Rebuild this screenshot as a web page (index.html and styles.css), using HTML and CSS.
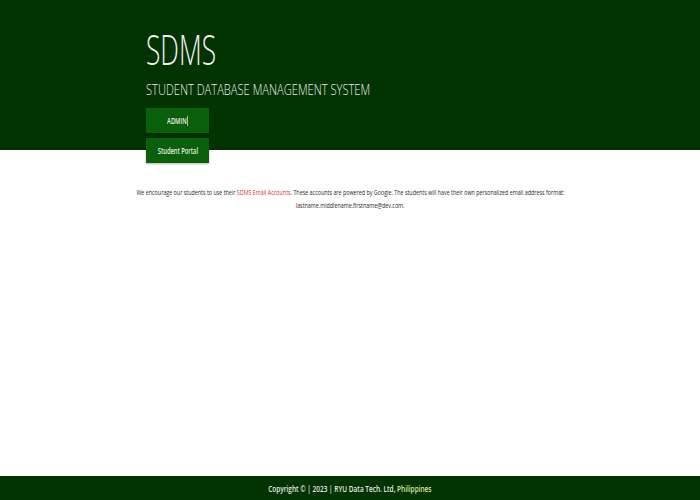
FILE: index.html
```html
<!DOCTYPE html>
<html>
<head>
<meta charset="utf-8">
<link rel="stylesheet" href="styles.css">
</head>
<body>
<header class="hero">
  <div class="hero-inner">
    <h1 class="title"><span class="squeeze">SDMS</span></h1>
    <p class="subtitle"><span class="squeeze">STUDENT DATABASE MANAGEMENT SYSTEM</span></p>
    <div class="buttons">
      <a class="btn"><span class="btn-text">ADMIN<span class="caret"></span></span></a>
      <a class="btn"><span class="btn-text">Student Portal</span></a>
    </div>
  </div>
</header>
<main class="content">
  <p class="notice"><span class="notice-line">We encourage our students to use their <span class="red">SDMS Email Accounts</span>. These accounts are powered by Google. The students will have their own personalized email address format:</span><br><span class="notice-line">lastname.middlename.firstname@dev.com.</span></p>
</main>
<footer class="footer"><span class="footer-text">Copyright © | 2023 | RYU Data Tech. Ltd, <span class="yellow">Philippines</span></span></footer>
</body>
</html>
```
FILE: styles.css
```css
html, body { margin: 0; padding: 0; }
body {
  width: 700px;
  height: 500px;
  display: flex;
  flex-direction: column;
  font-family: "Open Sans", sans-serif;
  background: #fff;
}
.hero {
  background: #003300;
  height: 150px;
  flex: none;
}
.hero-inner {
  padding: 26px 0 0 146px;
}
.squeeze {
  display: inline-block;
  transform-origin: left center;
  white-space: nowrap;
}
.title {
  margin: 0;
  font-weight: 300;
  font-size: 42px;
  line-height: 46px;
  color: #f2f2f2;
}
.title .squeeze { transform: scaleX(0.627); }
.subtitle {
  margin: 8px 0 0;
  font-weight: 300;
  font-size: 15px;
  line-height: 18px;
  color: #ececec;
}
.subtitle .squeeze { transform: scaleX(0.743); }
.buttons {
  margin-top: 10px;
  display: flex;
  flex-direction: column;
  gap: 5px;
  width: 63px;
}
.btn {
  display: flex;
  align-items: center;
  justify-content: center;
  height: 25px;
  background: #0a600a;
  color: #e8f0e8;
  font-size: 8px;
  font-weight: 600;
  box-shadow: 0 1px 2px rgba(0,0,0,0.3);
}
.btn-text {
  display: inline-block;
  white-space: nowrap;
  transform: scaleX(0.72);
}
.caret {
  display: inline-block;
  width: 1px;
  height: 10px;
  background: #e0e0e0;
  margin-left: 1px;
  vertical-align: middle;
}
.content {
  flex: 1;
  padding-top: 35px;
}
.notice {
  margin: 0;
  text-align: center;
  font-size: 8px;
  line-height: 13px;
  color: #2a2a2a;
}
.notice-line {
  display: inline-block;
  white-space: nowrap;
  transform: scaleX(0.67);
}
.red { color: #e03030; }
.footer {
  flex: none;
  height: 24px;
  background: #003300;
  color: #e8e8e8;
  font-size: 8px;
  font-weight: 600;
  display: flex;
  align-items: center;
  justify-content: center;
}
.footer-text {
  display: inline-block;
  white-space: nowrap;
  transform: scaleX(0.81);
}
.yellow { color: #dce8a0; }
```
